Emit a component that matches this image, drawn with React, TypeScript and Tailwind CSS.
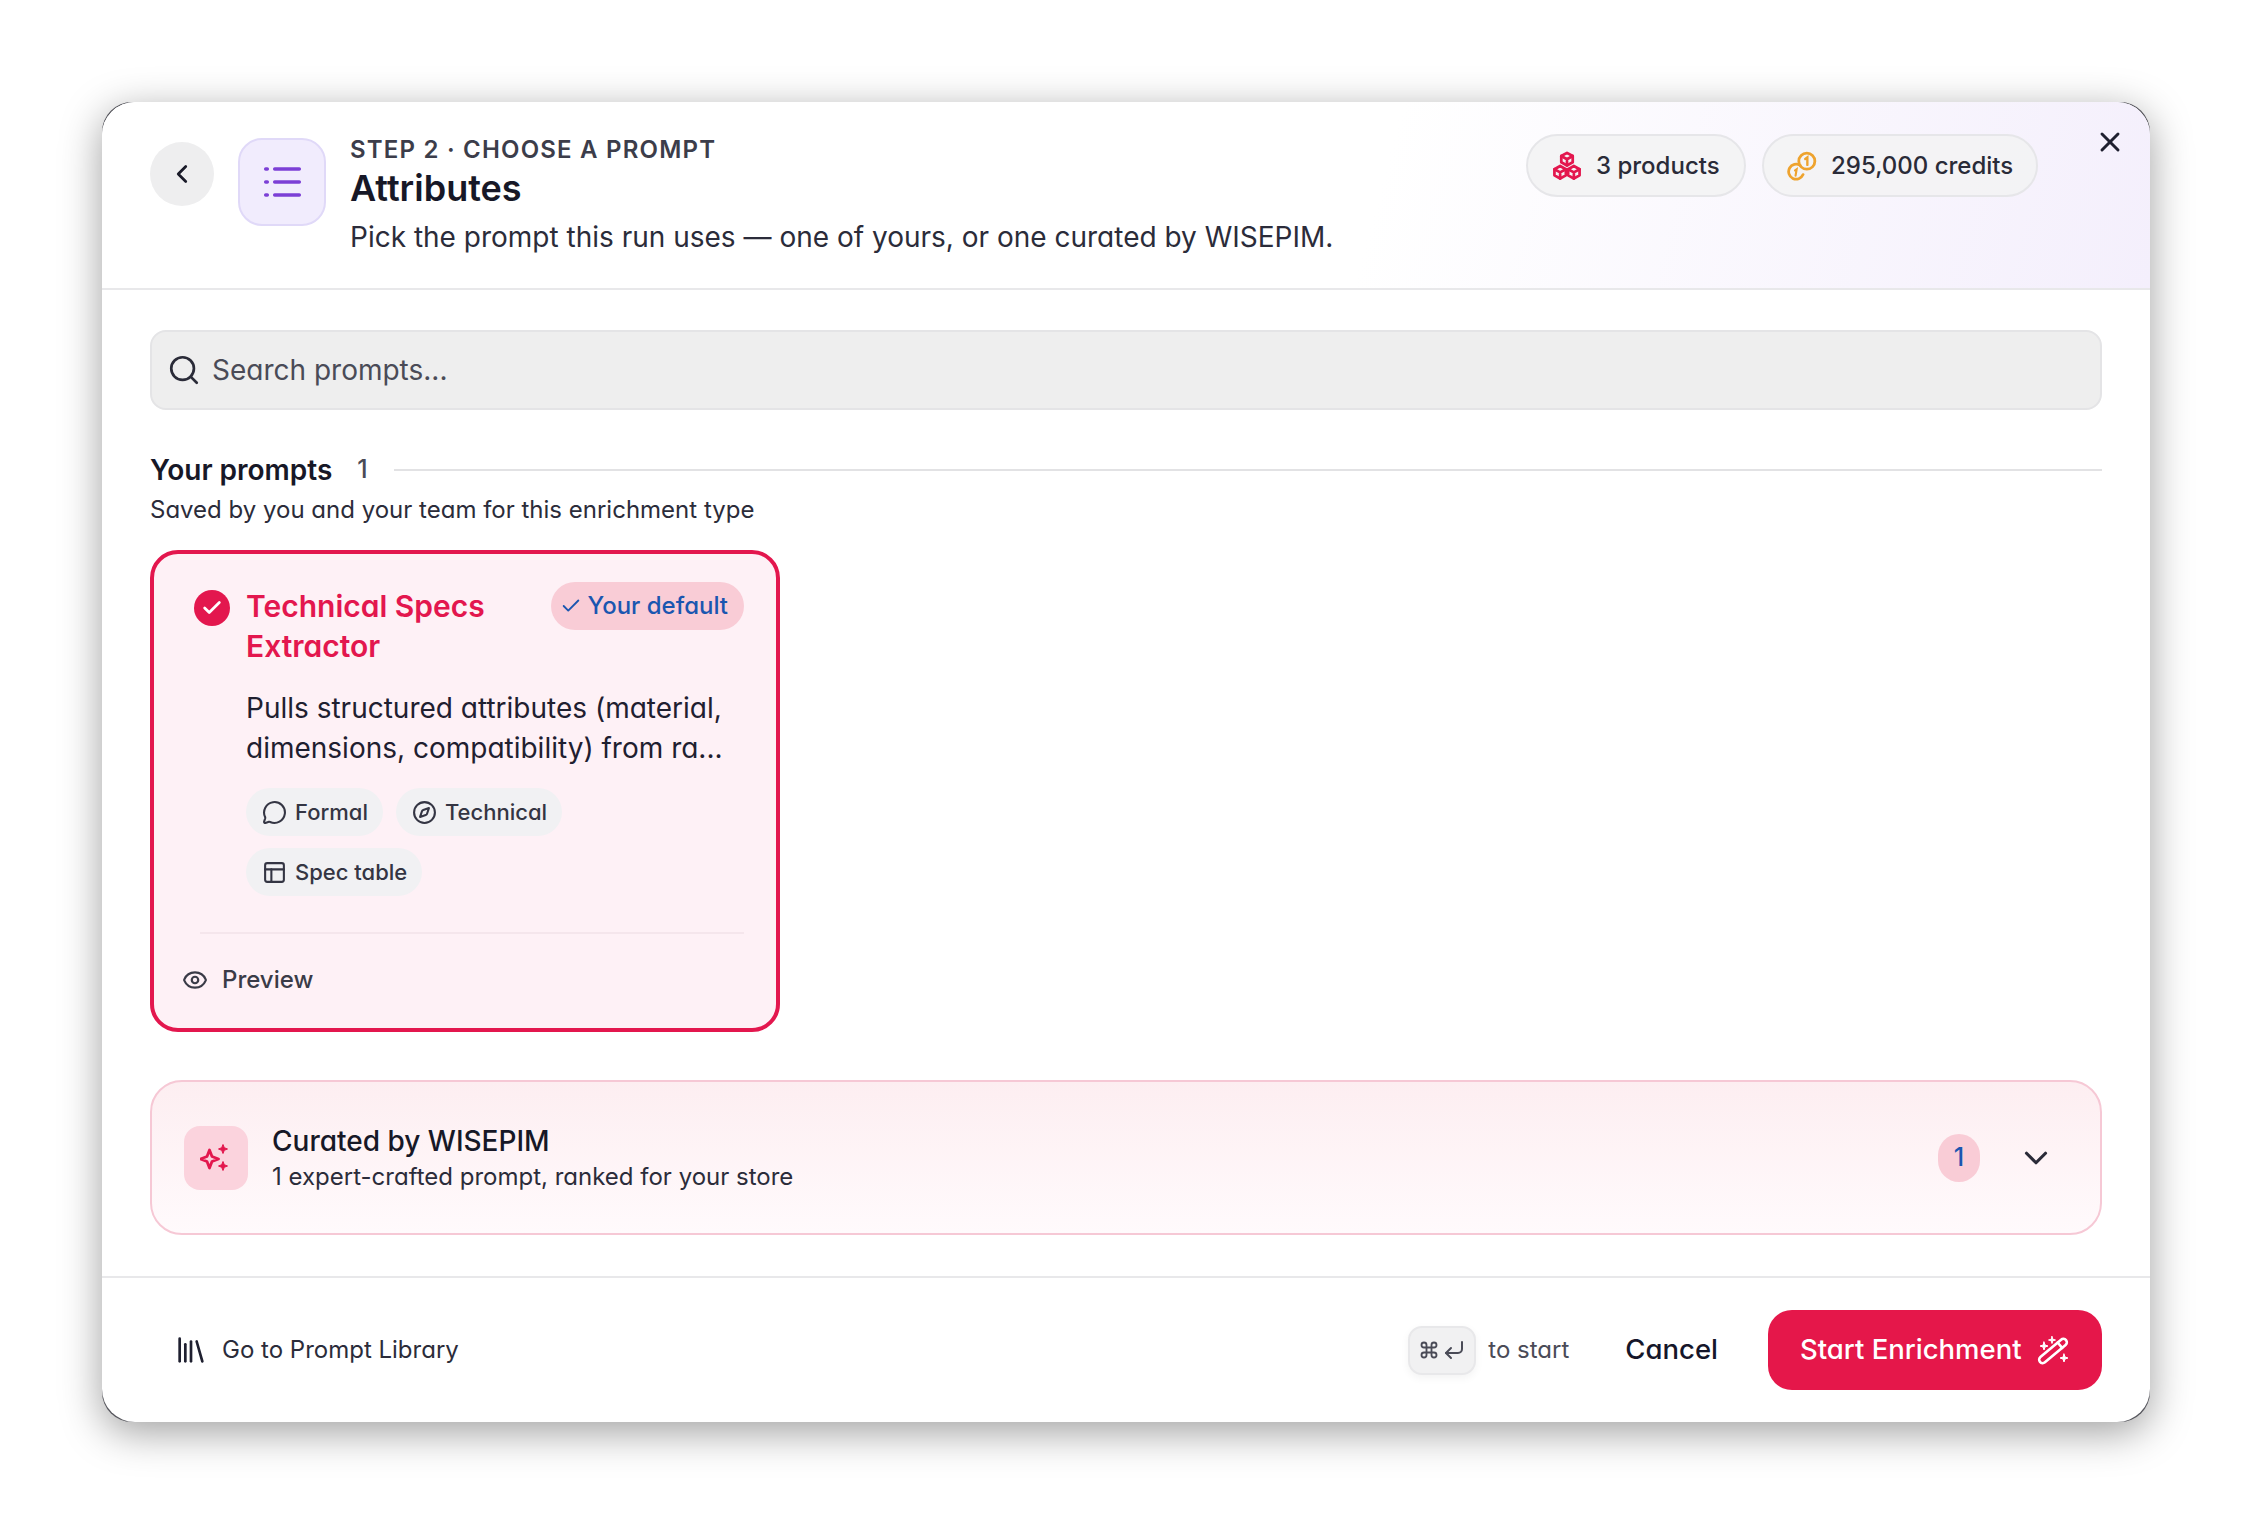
import { Check, ChevronDown, ChevronLeft, Command, Compass, CornerDownLeft, Eye, Library, MessageCircle, PanelsTopLeft, Search, X } from 'lucide-react';

const PromptListIcon = () => (
  <svg viewBox="0 0 40 40" className="h-[40px] w-[40px]" fill="none" stroke="#7c3fd6" strokeWidth="3.500" strokeLinecap="round">
    <path d="M3.700 7h1.600M12.700 7h24.600M3.700 20h1.600M12.700 20h24.600M3.700 33h1.600M12.700 33h24.600" />
  </svg>
);

const BoxesIcon = () => (
  <svg viewBox="0 0 28 28" className="-mx-[2px] h-[32px] w-[32px]" fill="none" stroke="#e3174e" strokeWidth="2.4" strokeLinejoin="round" strokeLinecap="round">
    <path d="M14 2.5l5 2.8v5.4l-5 2.8-5-2.8V5.3z" />
    <path d="M9 5.3l5 2.8 5-2.8M14 8.1v5.4" />
    <path d="M8 14l5 2.8v5.4L8 25l-5-2.8v-5.4z" />
    <path d="M3 16.8l5 2.8 5-2.8M8 19.6V25" />
    <path d="M20 14l5 2.8v5.4L20 25l-5-2.8v-5.4z" />
    <path d="M15 16.8l5 2.8 5-2.8M20 19.6V25" />
  </svg>
);

const CoinsIcon = () => (
  <svg viewBox="0 0 28 28" className="-mx-[1px] h-[30px] w-[30px]" fill="none" stroke="#eea32e" strokeWidth="2.6" strokeLinecap="round">
    <circle cx="18.500" cy="9.500" r="7.500" />
    <path d="M17 7.500l2-1.500v7" strokeWidth="2.200" />
    <path d="M12.300 13.400A7 7 0 1 0 15 22" />
    <path d="M7.500 18l1.500-1-1 6" strokeWidth="2" />
  </svg>
);

const CuratedSparkle = () => (
  <svg viewBox="0 0 32 32" className="h-[32px] w-[32px]" fill="none" stroke="#e3174e" strokeWidth="2.800" strokeLinejoin="round">
    <path d="M9.500 8l2.500 6.500 6.500 2.500-6.500 2.500L9.500 26 7 19.500.5 17 7 14.500z" />
    <path d="M23 2.500l1.300 3.200L27.500 7l-3.200 1.300L23 11.500l-1.300-3.200L18.500 7l3.200-1.300z" fill="#e3174e" strokeWidth="1" />
    <path d="M23 19.500l1.300 3.200 3.200 1.300-3.200 1.300-1.300 3.200-1.300-3.200-3.200-1.300 3.200-1.300z" fill="#e3174e" strokeWidth="1" />
  </svg>
);

const Wand = () => (
  <svg viewBox="0 0 36 36" className="h-[36px] w-[36px]" fill="none" stroke="#ffffff" strokeWidth="2.600" strokeLinecap="round" strokeLinejoin="round">
    <g transform="translate(17 19) rotate(-40)">
      <rect x="-17" y="-3.500" width="34" height="7" rx="3.500" />
      <path d="M9 -3.500V3.500" />
    </g>
    <path d="M8 10l1 3 3 1-3 1-1 3-1-3-3-1 3-1z" fill="#ffffff" strokeWidth="1" />
    <path d="M16 4.500l.8 2.700 2.700.8-2.700.8-.8 2.700-.8-2.700L12.500 8l2.700-.8z" fill="#ffffff" strokeWidth="1" />
    <path d="M28 22l1 3 3 1-3 1-1 3-1-3-3-1 3-1z" fill="#ffffff" strokeWidth="1" />
  </svg>
);

const Pill = ({ icon, label, className }: { icon: React.ReactNode; label: string; className: string }) => (
  <div className={`flex h-[63px] items-center gap-[15px] rounded-full border-2 border-[#e6e6e9] bg-[#f3f3f4]/90 text-[24px] font-medium text-[#2a2b38] ${className}`}>
    {icon}
    <span>{label}</span>
  </div>
);

const Chip = ({ icon, label }: { icon: React.ReactNode; label: string }) => (
  <span className="flex h-[48px] items-center gap-[8px] rounded-full bg-[#f1f1f3] pl-[16px] pr-[15px] text-[22px] font-medium text-[#343543]">
    {icon}
    {label}
  </span>
);

export default function App() {
  return (
    <div className="h-[1524px] w-[2252px] overflow-hidden bg-white pl-[102px] pt-[102px] [font-family:Inter,'Noto_Sans',sans-serif] [font-feature-settings:'cv11']">
      {/* corners show a thin dark crescent in the shot */}
      <div className="h-[1320px] w-[2048px] rounded-[30px] bg-[#55555c] shadow-[0_10px_42px_rgba(0,0,0,0.38)]">
        <div className="flex h-full flex-col overflow-hidden rounded-[33px] bg-white">
          {/* Header */}
          <header className="relative flex h-[188px] shrink-0 items-start justify-between border-b-2 border-[#e8e8ea] bg-[linear-gradient(105deg,#ffffff_62%,#f4effc_100%)] pl-[48px] pr-[112px] pt-[32px]">
            <div className="flex items-start">
              <button className="mt-[8px] flex h-[64px] w-[64px] items-center justify-center rounded-full bg-[#eeeeef] text-[#1a1b29]">
                <ChevronLeft className="h-[30px] w-[30px]" strokeWidth={2.2} />
              </button>
              <div className="ml-[24px] mt-[4px] flex h-[88px] w-[88px] items-center justify-center rounded-[24px] border-2 border-[#e0d9f8] bg-[#f1ecfd]">
                <PromptListIcon />
              </div>
              <div className="ml-[24px]">
                <div className="text-[24px] font-semibold leading-[32px] tracking-[0.05em] text-[#3c3d4a]">STEP 2 · CHOOSE A PROMPT</div>
                <h1 className="text-[36px] font-semibold leading-[44px] text-[#171827]">Attributes</h1>
                <p className="mt-[7px] text-[28px] leading-[40px] text-[#2b2c3a]">
                  Pick the prompt this run uses — one of yours, or one curated by WISEPIM.
                </p>
              </div>
            </div>
            <div className="flex gap-[16px]">
              <Pill icon={<BoxesIcon />} label="3 products" className="w-[220px] pl-[25px]" />
              <Pill icon={<CoinsIcon />} label="295,000 credits" className="w-[276px] pl-[24px]" />
            </div>
            <button className="absolute right-[24px] top-[24px] text-[#1f2030]">
              <X className="h-[32px] w-[32px]" strokeWidth={2.2} />
            </button>
          </header>

          {/* Body */}
          <main className="flex flex-1 flex-col px-[48px] pt-[40px]">
            <div className="flex h-[80px] items-center gap-[11px] rounded-[16px] border-2 border-[#e4e4e6] bg-[#eeeeee] pl-[15px] text-[28px] text-[#4a4b57]">
              <Search className="h-[34px] w-[34px] text-[#2a2b38]" strokeWidth={1.9} />
              <span>Search prompts...</span>
            </div>

            <div className="mt-[40px] flex h-[40px] items-center">
              <h2 className="text-[28px] font-semibold text-[#171827]">Your prompts</h2>
              <span className="ml-[25px] text-[25px] font-medium text-[#4a4b57]">1</span>
              <div className="ml-[26px] h-[2px] flex-1 bg-[#e2e2e4]" />
            </div>
            <p className="mt-[2px] text-[24px] leading-[36px] text-[#2b2c3a]">Saved by you and your team for this enrichment type</p>

            {/* Selected prompt card */}
            <div className="mt-[22px] h-[482px] w-[630px] rounded-[28px] border-4 border-[#e3174e] bg-[#fef1f6] pl-[28px] pr-[32px] pt-[28px]">
              <div className="flex items-start">
                <span className="ml-[12px] mt-[8px] flex h-[36px] w-[36px] shrink-0 items-center justify-center rounded-full bg-[#e3174e] text-white">
                  <Check className="h-[22px] w-[22px]" strokeWidth={3} />
                </span>
                <h3 className="ml-[16px] w-[270px] pt-[4px] text-[30px] font-semibold leading-[40px] text-[#e3174e]">Technical Specs Extractor</h3>
                <span className="ml-auto flex h-[48px] shrink-0 items-center gap-[6px] rounded-full bg-[#f9ccd6] pl-[9px] pr-[16px] text-[24px] font-medium text-[#1a56b0]">
                  <Check className="h-[22px] w-[22px]" strokeWidth={2} />
                  Your default
                </span>
              </div>
              <p className="ml-[64px] mt-[22px] whitespace-nowrap text-[28px] leading-[40px] text-[#1f2030]">
                Pulls structured attributes (material,
                <br />
                dimensions, compatibility) from ra...
              </p>
              <div className="ml-[64px] mt-[20px] flex flex-col gap-[12px]">
                <div className="flex gap-[13px]">
                  <Chip icon={<MessageCircle className="h-[25px] w-[25px]" strokeWidth={2} />} label="Formal" />
                  <Chip icon={<Compass className="h-[25px] w-[25px]" strokeWidth={2} />} label="Technical" />
                </div>
                <div className="flex">
                  <Chip icon={<PanelsTopLeft className="h-[25px] w-[25px]" strokeWidth={2} />} label="Spec table" />
                </div>
              </div>
              <div className="ml-[18px] mt-[36px] h-[2px] bg-[#f5e6ec]" />
              <div className="mt-[28px] flex h-[36px] items-center gap-[14px] text-[24px] font-medium text-[#3a3b47]">
                <Eye className="h-[26px] w-[26px]" strokeWidth={2} />
                Preview
              </div>
            </div>

            {/* Curated section */}
            <div className="mt-[48px] flex h-[155px] items-center rounded-[32px] border-2 border-[#f6c8d5] bg-[linear-gradient(180deg,#fdeef1_0%,#fffafc_100%)] pl-[32px] pr-[45px]">
              <span className="flex h-[64px] w-[64px] items-center justify-center rounded-[16px] bg-[#fbd3dd]">
                <CuratedSparkle />
              </span>
              <div className="ml-[24px] pt-[3px]">
                <div className="text-[28px] font-medium leading-[36px] text-[#171827]">Curated by WISEPIM</div>
                <div className="text-[24px] leading-[36px] text-[#2b2c3a]">1 expert-crafted prompt, ranked for your store</div>
              </div>
              <span className="ml-auto flex h-[48px] w-[42px] items-center justify-center rounded-full bg-[#f9ccd6] text-[25px] font-medium text-[#1a56b0]">1</span>
              <ChevronDown className="ml-[37px] h-[38px] w-[38px] text-[#2a2b38]" strokeWidth={2} />
            </div>
          </main>

          {/* Footer */}
          <footer className="flex h-[146px] shrink-0 items-center border-t-2 border-[#e8e8ea] pl-[72px] pr-[48px]">
            <Library className="h-[34px] w-[34px] text-[#1f2030]" strokeWidth={1.9} />
            <span className="ml-[14px] text-[24px] text-[#2b2c3a]">Go to Prompt Library</span>
            <kbd className="ml-auto flex h-[49px] w-[68px] items-center justify-center gap-[3px] rounded-[14px] border-2 border-[#e8e8ea] bg-[#f1f1f2] text-[#4a4b57] shadow-[0_3px_8px_rgba(0,0,0,0.05)]">
              <Command className="h-[20px] w-[20px]" strokeWidth={2.2} />
              <CornerDownLeft className="h-[24px] w-[24px]" strokeWidth={2} />
            </kbd>
            <span className="ml-[12px] text-[24px] text-[#4a4b57]">to start</span>
            <button className="ml-[56px] text-[27.5px] font-medium text-[#15162a]">Cancel</button>
            <button className="ml-[50px] flex h-[80px] w-[334px] items-center gap-[14px] rounded-[24px] bg-[#e5174a] pl-[32px] text-[27.5px] font-medium text-white">
              Start Enrichment
              <Wand />
            </button>
          </footer>
        </div>
      </div>
    </div>
  );
}
